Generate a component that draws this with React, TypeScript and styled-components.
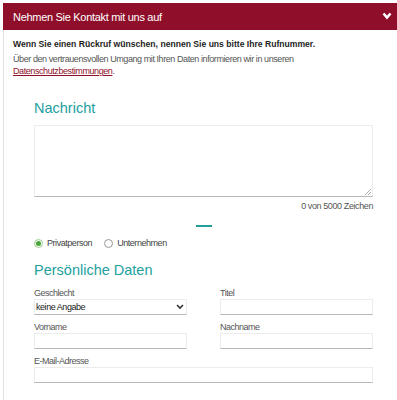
import styled, { createGlobalStyle } from "styled-components";

const GlobalStyle = createGlobalStyle`
  body {
    margin: 0;
    background: #fff;
    font-family: "Liberation Sans", Arial, sans-serif;
  }
`;

export default function App() {
  return (
    <>
      <GlobalStyle />
      <Page>
        <Header>
          <span>Nehmen Sie Kontakt mit uns auf</span>
          <svg width="10" height="8" viewBox="0 0 10 8">
            <polyline
              points="1.5,1.5 5,5.5 8.5,1.5"
              fill="none"
              stroke="#fff"
              strokeWidth="2.6"
            />
          </svg>
        </Header>

        <Panel>
          <Lead>Wenn Sie einen Rückruf wünschen, nennen Sie uns bitte Ihre Rufnummer.</Lead>
          <Info>
            Über den vertrauensvollen Umgang mit Ihren Daten informieren wir in unseren
            <br />
            <a href="#">Datenschutzbestimmungen</a>.
          </Info>

          <Form>
            <Heading>Nachricht</Heading>
            <Message />
            <Counter>0 von 5000 Zeichen</Counter>
            <Divider />

            <RadioRow>
              <RadioLabel>
                <Radio $checked />
                Privatperson
              </RadioLabel>
              <RadioLabel>
                <Radio />
                Unternehmen
              </RadioLabel>
            </RadioRow>

            <Heading $top={13}>Persönliche Daten</Heading>
            <Fields>
              <Field>
                <Label>Geschlecht</Label>
                <SelectWrap>
                  <Select defaultValue="keine">
                    <option value="keine">keine Angabe</option>
                  </Select>
                  <svg width="8" height="6" viewBox="0 0 8 6">
                    <polyline
                      points="1,1 4,4 7,1"
                      fill="none"
                      stroke="#333"
                      strokeWidth="1.6"
                    />
                  </svg>
                </SelectWrap>
              </Field>
              <Field>
                <Label>Titel</Label>
                <Input />
              </Field>
              <Field>
                <Label>Vorname</Label>
                <Input />
              </Field>
              <Field>
                <Label>Nachname</Label>
                <Input />
              </Field>
              <Field $wide>
                <Label>E-Mail-Adresse</Label>
                <Input />
              </Field>
            </Fields>
          </Form>
        </Panel>
      </Page>
    </>
  );
}

const Page = styled.div`
  padding: 3px 0 0 3px;
  min-height: 397px;
`;

const Header = styled.div`
  display: flex;
  justify-content: space-between;
  align-items: center;
  height: 27px;
  padding: 0 5px 0 10px;
  background: #8f0f2b;
  color: #fff;
  font-size: 11px;
  letter-spacing: -0.3px;

  svg {
    margin-top: -1px;
  }
`;

const Panel = styled.div`
  border-left: 1px solid #e2e2e2;
  padding: 7px 0 20px 9px;
`;

const Lead = styled.div`
  font-size: 8.6px;
  font-weight: bold;
  line-height: 14px;
  color: #1e1e1e;
`;

const Info = styled.div`
  margin-top: 2px;
  font-size: 9px;
  letter-spacing: -0.42px;
  line-height: 12px;
  color: #555;

  a {
    color: #8f0f2b;
    text-decoration: underline;
  }
`;

const Form = styled.div`
  margin: 0 24px 0 21px;
`;

const Heading = styled.div<{ $top?: number }>`
  margin-top: ${(p) => p.$top ?? 23}px;
  font-size: 14.5px;
  line-height: 17px;
  color: #22a0a0;
`;

const Message = styled.div`
  box-sizing: border-box;
  position: relative;
  height: 72px;
  margin-top: 8px;
  border: 1px solid #ececec;
  border-bottom: 1px solid #b8b8b8;

  &::after {
    content: "";
    position: absolute;
    right: 1px;
    bottom: 1px;
    width: 6px;
    height: 6px;
    background: linear-gradient(
      135deg,
      transparent 45%,
      #aaa 45%,
      #aaa 52%,
      transparent 52%,
      transparent 72%,
      #aaa 72%,
      #aaa 80%,
      transparent 80%
    );
  }
`;

const Counter = styled.div`
  margin-top: 3px;
  text-align: right;
  font-size: 9px;
  letter-spacing: -0.4px;
  line-height: 12px;
  color: #555;
`;

const Divider = styled.div`
  width: 16px;
  height: 2px;
  margin: 13px auto 0;
  background: #22a0a0;
`;

const RadioRow = styled.div`
  display: flex;
  gap: 12px;
  margin-top: 10px;
`;

const RadioLabel = styled.label`
  display: flex;
  align-items: center;
  gap: 4px;
  font-size: 9px;
  letter-spacing: -0.45px;
  line-height: 12px;
  color: #444;
`;

const Radio = styled.span<{ $checked?: boolean }>`
  box-sizing: border-box;
  display: inline-flex;
  align-items: center;
  justify-content: center;
  width: 9px;
  height: 9px;
  border-radius: 50%;
  border: 1px solid ${(p) => (p.$checked ? "#9fce90" : "#999")};
  background: #fff;

  &::after {
    content: "";
    display: ${(p) => (p.$checked ? "block" : "none")};
    width: 5px;
    height: 5px;
    border-radius: 50%;
    background: #4aa63a;
  }
`;

const Fields = styled.div`
  display: grid;
  grid-template-columns: 153px 153px;
  justify-content: space-between;
  row-gap: 7px;
  margin-top: 9px;
`;

const Field = styled.div<{ $wide?: boolean }>`
  display: flex;
  flex-direction: column;
  grid-column: ${(p) => (p.$wide ? "1 / -1" : "auto")};
`;

const Label = styled.div`
  font-size: 9px;
  letter-spacing: -0.5px;
  line-height: 11px;
  color: #555;
`;

const Input = styled.input`
  box-sizing: border-box;
  height: 16px;
  margin: 0;
  padding: 0 2px;
  border: 1px solid #ececec;
  border-bottom: 1px solid #b8b8b8;
  outline: none;
  background: #fff;
`;

const SelectWrap = styled.div`
  position: relative;
  height: 16px;

  svg {
    position: absolute;
    right: 3px;
    top: 5px;
    pointer-events: none;
  }
`;

const Select = styled.select`
  box-sizing: border-box;
  display: block;
  width: 100%;
  height: 16px;
  margin: 0;
  padding: 0 1px;
  appearance: none;
  border: 1px solid #ececec;
  border-bottom: 1px solid #b8b8b8;
  border-radius: 0;
  background: #fff;
  outline: none;
  font-family: "Liberation Sans", Arial, sans-serif;
  font-size: 9px;
  letter-spacing: -0.45px;
  color: #222;
`;
